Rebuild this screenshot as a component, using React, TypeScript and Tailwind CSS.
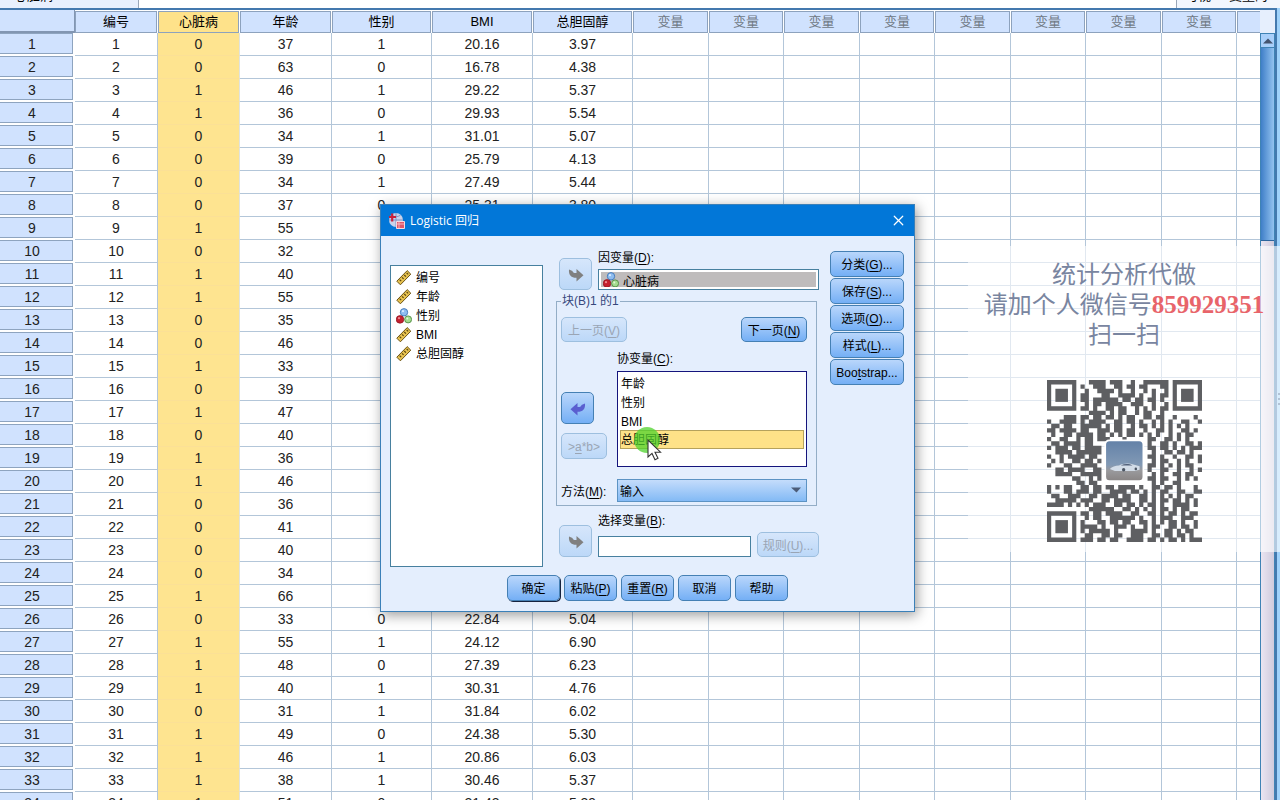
import { useState } from "react";
import type { ReactNode } from "react";
import { X } from "lucide-react";

const columns = [
  { name: "编号", width: "w-[83px]" },
  { name: "心脏病", width: "w-[82px]" },
  { name: "年龄", width: "w-[92px]" },
  { name: "性别", width: "w-[100px]" },
  { name: "BMI", width: "w-[101px]" },
  { name: "总胆固醇", width: "w-[100px]" },
];

const emptyColumns = [
  "w-[76px]",
  "w-[75px]",
  "w-[76px]",
  "w-[75px]",
  "w-[76px]",
  "w-[75px]",
  "w-[76px]",
  "w-[75px]",
];

// 心脏病, 年龄, 性别, BMI, 总胆固醇
const cases: string[][] = [
  ["0", "37", "1", "20.16", "3.97"],
  ["0", "63", "0", "16.78", "4.38"],
  ["1", "46", "1", "29.22", "5.37"],
  ["1", "36", "0", "29.93", "5.54"],
  ["0", "34", "1", "31.01", "5.07"],
  ["0", "39", "0", "25.79", "4.13"],
  ["0", "34", "1", "27.49", "5.44"],
  ["0", "37", "0", "25.31", "3.80"],
  ["1", "55"],
  ["0", "32"],
  ["1", "40"],
  ["1", "55"],
  ["0", "35"],
  ["0", "46"],
  ["1", "33"],
  ["0", "39"],
  ["1", "47"],
  ["0", "40"],
  ["1", "36"],
  ["1", "46"],
  ["0", "36"],
  ["0", "41"],
  ["0", "40"],
  ["0", "34"],
  ["1", "66"],
  ["0", "33", "0", "22.84", "5.04"],
  ["1", "55", "1", "24.12", "6.90"],
  ["1", "48", "0", "27.39", "6.23"],
  ["1", "40", "1", "30.31", "4.76"],
  ["0", "31", "1", "31.84", "6.02"],
  ["1", "49", "0", "24.38", "5.30"],
  ["1", "46", "1", "20.86", "6.03"],
  ["1", "38", "1", "30.46", "5.37"],
  ["1", "51", "0", "21.43", "5.39"],
];

const sourceVariables = [
  { name: "编号", nominal: false },
  { name: "年龄", nominal: false },
  { name: "性别", nominal: true },
  { name: "BMI", nominal: false },
  { name: "总胆固醇", nominal: false },
];

const covariates = ["年龄", "性别", "BMI", "总胆固醇"];

const qrRows = [
  "..........####.###..#..######........",
  "........#..###..##.##.##...##........",
  ".........#..####.#..#..#.#..#........",
  "........##...##..####.#..#.##........",
  "........##.######.##.##.##.#.........",
  ".........#.##.####..###..#..#........",
  "........##.#..##.##..#.#.#.##........",
  "..........####.#.##..#.##..#.........",
  "....###.##.##.##.#.##..##.##..#....#.",
  "#..####.#.####..##.##.#..#.#.#..##..#",
  ".##.##..#####.#.##..#.##.#.#.#.#.#...",
  "##.####.##..###.##.##..#..##.#..##.#.",
  ".#..##.####.##.#.#.##.#.#.#..#.#.##..",
  "#..##..#.##.###...#.....##..##.#.#...",
  ".##.####.##.............#..##.#..##.#",
  "#.###.##.####...........##.##.#.#.###",
  "..####.######............#..##.##.#..",
  "#..#.####.##............##.#..#..##.#",
  ".#.#..##.##.#............#.##..#.#..#",
  "#...##..####............##.#.#.#.##..",
  "..##.####..##...........#..##..#..#.#",
  "..####..#####............#.#..##.##..",
  "......##..#.#...........##.##..#.#.#.",
  ".......##.##.............#.#..##.....",
  "#.#.##..##.##.##.####.#..##.##.#...#.",
  "#...##.###.##..####.##.#.#.##..##..##",
  ".##..###..##.####.##..##.#.#.#.#.##..",
  "..#####.###..##.####..##.#.##.##.#.#.",
  "####.#.#.#.###..##.##.#.##.#..####.#.",
  "..........######..##.#.#.#.##.#.##...",
  "........##.##.####..##..##.#.##.#.##.",
  ".........#.##..######.#..#.###..###..",
  "........#...##.##.##..##.#.#.##.#..#.",
  "........####.#..###.#..#.##..##.##.#.",
  "........#.#####.#...####.#..##.#.##..",
  ".........##..##.##..###..##.##.##.#..",
  "........###.##.##..####.##.#.##.#.###",
];

const qrPath = qrRows
  .map((row, y) =>
    row
      .split("")
      .map((c, x) => (c === "#" ? `M${x} ${y}h1v1h-1z` : ""))
      .join("")
  )
  .join("");

const RulerIcon = () => (
  <svg className="h-4 w-4 shrink-0" viewBox="0 0 16 16">
    <path d="M.8 11.200 11.200.6l3.600 3.600L4.400 14.800z" fill="#e8c350" stroke="#6b5314" />
    <path
      d="m3.600 9.600 1.600 1.600M6 7.300l1.600 1.600M8.300 5l1.600 1.600M10.600 2.800l1.600 1.600"
      stroke="#5a4510"
      strokeWidth="1.200"
    />
  </svg>
);

const NominalIcon = () => (
  <svg className="h-4 w-4 shrink-0" viewBox="0 0 16 16">
    <circle cx="8" cy="4.300" r="3.700" fill="#8fbdf0" stroke="#3f76b8" strokeWidth=".9" />
    <circle cx="4" cy="11.400" r="3.800" fill="#c4202f" stroke="#8c1420" strokeWidth=".7" />
    <circle cx="12.100" cy="11.400" r="3.500" fill="#a5dc8f" stroke="#4f8a42" strokeWidth=".9" />
    <circle cx="3" cy="10.200" r="1.100" fill="#ef8a90" />
    <circle cx="7" cy="3.200" r="1.100" fill="#d9ebff" />
    <circle cx="11.300" cy="10.400" r="1" fill="#e2f8d8" />
  </svg>
);

const AppIcon = () => (
  <svg className="h-[18px] w-[18px]" viewBox="0 0 18 18">
    <circle cx="8" cy="8" r="7" fill="#c9d3ea" />
    <path d="M8 1v14M1 8h14M3.500 3.200c3 2 6 2 9 0" stroke="#7f93c4" fill="none" />
    <path d="M4.200 1.500v8M1 5h7" stroke="#c8203a" strokeWidth="2.200" />
    <path d="M8.500 9.500h8v7h-8z" fill="#e0566a" stroke="#f6dbe2" />
    <path d="M8.500 12h8M11 9.500v7" stroke="#f9c9d0" strokeWidth=".8" />
  </svg>
);

const ArrowShape = ({ left, color }: { left?: boolean; color: string }) => (
  <svg
    className={left ? "h-4 w-4 -scale-x-100" : "h-4 w-4"}
    viewBox="0 0 16 16"
    fill={color}
  >
    <path d="M1 2.500 4.500 4c.3 1.600 1.500 2.200 4 2V2L15.500 8.200 8.500 14.500V10.800C3.800 11 .4 8.500 1 2.500z" />
  </svg>
);

// mnemonic letter shown underlined in brackets
const Key = ({ k }: { k: string }) => (
  <span>
    (<u className="underline-offset-2">{k}</u>)
  </span>
);

const DialogButton = ({
  children,
  className,
  disabled,
  label,
}: {
  children: ReactNode;
  className: string;
  disabled?: boolean;
  label?: string;
}) => (
  <button
    type="button"
    disabled={disabled}
    aria-label={label}
    className={`flex shrink-0 items-center justify-center whitespace-nowrap rounded-[5px] border pt-0.5 ${
      disabled
        ? "border-[#9dbfdf] bg-linear-to-b from-[#d6e6fb] to-[#bcd8f8] text-[#9aa5b4]"
        : "border-[#4580b4] bg-linear-to-b from-[#b9d6fb] to-[#74aff5] text-black"
    } ${className}`}
  >
    {children}
  </button>
);

const DataGrid = () => (
  <table className="w-full table-fixed border-separate border-spacing-0 text-center text-sm text-[#222]">
    <colgroup>
      <col className="w-[75px]" />
      {columns.map((c) => (
        <col key={c.name} className={c.width} />
      ))}
      {emptyColumns.map((w, i) => (
        <col key={i} className={w} />
      ))}
      <col />
    </colgroup>
    <thead>
      <tr className="h-[23px] text-[13px] text-black">
        <th className="p-0">
          <div className="h-[23px] border-r border-b-2 border-[#8296b2] bg-[#d0e2fe]" />
        </th>
        {columns.map((c) => (
          <th key={c.name} className="p-0 pr-px font-normal">
            <div
              className={`h-[22px] border border-[#8da2bd] leading-5 ${
                c.name === "心脏病" ? "bg-[#fee28a]" : "bg-[#d0e2fe]"
              }`}
            >
              {c.name}
            </div>
          </th>
        ))}
        {emptyColumns.map((_, i) => (
          <th key={i} className="p-0 pr-px font-normal text-[#6f7985]">
            <div className="h-[22px] border border-[#8da2bd] bg-[#d0e2fe] leading-5">
              变量
            </div>
          </th>
        ))}
        <th className="p-0">
          <div className="h-[22px] border border-r-0 border-[#8da2bd] bg-[#d0e2fe]" />
        </th>
      </tr>
    </thead>
    <tbody>
      {cases.map((row, i) => (
        <tr key={i} className="h-[23px]">
          <th className="p-0 pr-0.5 pb-0.5 font-normal">
            <div className="h-[21px] border border-l-0 border-[#8ea4bf] bg-[#d0e2fe] pr-2 leading-5">
              {i + 1}
            </div>
          </th>
          <td className="border-r border-b border-[#b3c6d9] p-0">{i + 1}</td>
          {columns.slice(1).map((c, j) => (
            <td
              key={c.name}
              className={
                j === 0
                  ? "border-r border-b border-r-[#dfe3e0] border-b-[#fbe096] bg-[#fee490] p-0"
                  : "border-r border-b border-[#b3c6d9] p-0"
              }
            >
              {row[j]}
            </td>
          ))}
          {emptyColumns.map((_, j) => (
            <td key={j} className="border-r border-b border-[#b3c6d9] p-0" />
          ))}
          <td className="border-b border-[#b3c6d9] p-0" />
        </tr>
      ))}
    </tbody>
  </table>
);

const LogisticDialog = () => {
  const [selected, setSelected] = useState("总胆固醇");

  return (
    <div
      role="dialog"
      aria-labelledby="dialog-title"
      className="absolute top-[204px] left-[380px] w-[535px] border border-[#3b80b8] bg-[#e4eefd] text-xs text-black shadow-[2px_3px_12px_rgba(0,0,0,0.4)]"
    >
      <div className="flex h-[31px] items-center bg-[#0277d8] pr-[7px] pl-[7px] text-white">
        <AppIcon />
        <h1
          id="dialog-title"
          className="ml-1 flex-1 font-['Open_Sans','Noto_Sans_CJK_SC',sans-serif] text-xs"
        >
          Logistic 回归
        </h1>
        <button type="button" aria-label="关闭">
          <X size={17} strokeWidth={1.7} />
        </button>
      </div>

      <div className="flex items-start pt-3.5 pr-2.5 pl-[9px]">
        <ul
          role="listbox"
          aria-label="变量"
          className="mt-[15px] h-[302px] w-[153px] border border-[#47809f] bg-white pt-0.5 pl-[5px]"
        >
          {sourceVariables.map((v) => (
            <li
              key={v.name}
              role="option"
              aria-selected={false}
              className="flex h-[19px] items-center gap-1"
            >
              {v.nominal ? <NominalIcon /> : <RulerIcon />}
              {v.name}
            </li>
          ))}
        </ul>

        <div className="ml-[13px] flex-1">
          <div className="flex h-10 items-end gap-1.5 pl-[3px]">
            <DialogButton className="h-8 w-[33px]" disabled label="移入因变量">
              <ArrowShape color="#808080" />
            </DialogButton>
            <div className="flex h-full flex-1 flex-col justify-between">
              <label htmlFor="dependent" className="leading-4">
                因变量
                <Key k="D" />:
              </label>
              <div className="flex h-[21px] items-center border border-[#47809f] bg-[#bfbcbc] pl-1 outline-2 -outline-offset-3 outline-white">
                <NominalIcon />
                <input
                  id="dependent"
                  readOnly
                  value="心脏病"
                  className="ml-1 h-5 w-40 bg-transparent pt-0.5 outline-none"
                />
              </div>
            </div>
          </div>

          <fieldset className="mt-[3px] mr-0.5 border border-[#93adc6] pr-[9px] pb-[3px] pl-1">
            <legend className="px-px leading-4 text-[#37477c]">块(B)1 的1</legend>
            <div className="flex justify-between pt-2">
              <DialogButton className="h-[25px] w-[66px]" disabled>
                上一页
                <Key k="V" />
              </DialogButton>
              <DialogButton className="h-[25px] w-[66px]">
                下一页
                <Key k="N" />
              </DialogButton>
            </div>
            <div id="covariates" className="mt-[9px] ml-14 leading-4">
              协变量
              <Key k="C" />:
            </div>
            <div className="mt-1 flex">
              <div className="w-14 pt-[21px]">
                <DialogButton className="h-8 w-[33px]" label="移出协变量">
                  <ArrowShape left color="#5a5fd0" />
                </DialogButton>
                <DialogButton className="mt-[9px] h-[26px] w-[46px]" disabled>
                  &gt;<u className="underline-offset-2">a</u>*b&gt;
                </DialogButton>
              </div>
              <ul
                role="listbox"
                aria-labelledby="covariates"
                className="h-24 flex-1 border border-[#14147c] bg-white px-0.5 pt-px"
              >
                {covariates.map((name) => (
                  <li
                    key={name}
                    role="option"
                    aria-selected={name === selected}
                    onClick={() => setSelected(name)}
                    className={
                      name === selected
                        ? "h-[19px] border border-[#b5a25c] bg-[#fee288] leading-[19px]"
                        : "h-[19px] px-px leading-[22px]"
                    }
                  >
                    {name}
                  </li>
                ))}
              </ul>
            </div>
            <div className="mt-3 flex items-center">
              <label htmlFor="method" className="w-14 pt-0.5">
                方法
                <Key k="M" />:
              </label>
              <div className="relative flex-1">
                <select
                  id="method"
                  className="block h-[23px] w-full appearance-none border border-[#5c93c4] bg-linear-to-b from-[#c4dcfb] to-[#83baf5] pt-0.5 pl-0.5"
                >
                  <option>输入</option>
                </select>
                <svg
                  className="pointer-events-none absolute top-2 right-1.5 h-1.5 w-2.5"
                  viewBox="0 0 10 6"
                >
                  <path d="M0 .5h10L5.500 5.500z" fill="#4c5c78" />
                </svg>
              </div>
            </div>
          </fieldset>

          <div className="mt-[7px] flex h-11 items-end gap-1.5 pl-[3px]">
            <DialogButton className="h-8 w-[33px]" disabled label="移入选择变量">
              <ArrowShape color="#808080" />
            </DialogButton>
            <div className="flex h-full flex-1 flex-col justify-between">
              <label htmlFor="selection" className="leading-4">
                选择变量
                <Key k="B" />:
              </label>
              <input
                id="selection"
                className="h-[21px] w-full border border-[#47809f] bg-white px-1"
              />
            </div>
            <DialogButton className="h-[25px] w-[62px]" disabled>
              规则
              <Key k="U" />
              ...
            </DialogButton>
          </div>
        </div>

        <div className="mt-px ml-[11px] flex w-[74px] flex-col gap-px">
          <DialogButton className="h-[26px]">
            分类
            <Key k="G" />
            ...
          </DialogButton>
          <DialogButton className="h-[26px]">
            保存
            <Key k="S" />
            ...
          </DialogButton>
          <DialogButton className="h-[26px]">
            选项
            <Key k="O" />
            ...
          </DialogButton>
          <DialogButton className="h-[26px]">
            样式
            <Key k="L" />
            ...
          </DialogButton>
          <DialogButton className="h-[26px]">
            Boo<u className="underline-offset-2">t</u>strap...
          </DialogButton>
        </div>
      </div>

      <div className="mt-2 flex justify-center gap-1 pb-2.5">
        <DialogButton className="h-[26px] w-[53px] shadow-[1px_1px_0_#16233f]">
          确定
        </DialogButton>
        <DialogButton className="h-[26px] w-[53px]">
          粘贴
          <Key k="P" />
        </DialogButton>
        <DialogButton className="h-[26px] w-[53px]">
          重置
          <Key k="R" />
        </DialogButton>
        <DialogButton className="h-[26px] w-[53px]">取消</DialogButton>
        <DialogButton className="h-[26px] w-[53px]">帮助</DialogButton>
      </div>
    </div>
  );
};

const QrCode = () => (
  <svg
    className="h-[162px] w-[155px]"
    viewBox="0 0 37 37"
    preserveAspectRatio="none"
    role="img"
    aria-label="二维码"
  >
    <defs>
      <linearGradient id="sky" x1="0" y1="0" x2="0" y2="1">
        <stop offset="0" stopColor="#6482a8" />
        <stop offset=".6" stopColor="#8199b5" />
        <stop offset=".75" stopColor="#9a9a9d" />
        <stop offset="1" stopColor="#8a8686" />
      </linearGradient>
    </defs>
    <path d={qrPath} fill="#5e5f62" />
    {["0 0", "30 0", "0 30"].map((at) => (
      <g key={at} transform={`translate(${at})`}>
        <path d="M.5.5h6v6h-6z" fill="none" stroke="#5e5f62" />
        <path d="M2 2h3v3H2z" fill="#5e5f62" />
      </g>
    ))}
    <rect x="13.700" y="13.600" width="9.500" height="9.700" rx="1.100" fill="#fff" />
    <rect x="14.100" y="14" width="8.700" height="8.900" rx=".8" fill="url(#sky)" />
    <path
      d="M15 20.300c.5-.6 1.300-.7 2.200-.8 1-.5 2.400-.6 3.400-.2l1.500.4v.8l-1.200.3h-4.700z"
      fill="#d3dde8"
    />
    <path d="M17.600 19.500c.9-.4 2-.4 2.800 0z" fill="#51617a" />
    <circle cx="18.300" cy="20.500" r=".4" fill="#4b5563" />
    <circle cx="21.200" cy="20.300" r=".3" fill="#4b5563" />
  </svg>
);

export default function App() {
  return (
    <div className="relative flex h-screen flex-col overflow-hidden bg-white font-['Liberation_Sans','Noto_Sans_CJK_SC',sans-serif]">
      {/* edit bar, scrolled mostly off the top */}
      <div className="flex h-2 shrink-0 items-end overflow-hidden text-[13px] leading-4">
        <div className="w-[139px] border-r border-[#9aa7b8] bg-[#e8f0fd] pb-1 pl-3.5">
          心脏病
        </div>
        <div className="flex-1 pb-1">&nbsp;</div>
        <div className="w-[104px] border-l border-[#9aa7b8] bg-[#f1f6fe] pb-1 pl-2 whitespace-nowrap">
          可视: 6 变量的
        </div>
      </div>

      <div className="flex min-h-0 flex-1 bg-[#9fd2fb]">
        <div className="flex min-w-0 flex-1 overflow-hidden border-t-2 border-r-2 border-[#4479ae] bg-white">
          <div className="min-w-0 flex-1 overflow-hidden">
            <DataGrid />
          </div>
          <div className="flex w-[15px] flex-col bg-[#e6effd] pt-[23px]">
            <div className="flex flex-1 flex-col border-x border-[#3f83b5] bg-linear-to-r from-[#ebe5f1] to-[#cfcbdd]">
              <button
                type="button"
                aria-label="向上滚动"
                className="flex h-[15px] items-center justify-center border-y border-[#3f83b5] bg-[#a9cffa]"
              >
                <svg className="h-1.5 w-2.5" viewBox="0 0 10 6">
                  <path d="M0 5.500 5 .5l5 5z" fill="#44546f" />
                </svg>
              </button>
              <div className="h-[193px] border-b border-[#2d649c] bg-linear-to-r from-[#3f7fc8] to-[#93c3f0]" />
            </div>
          </div>
        </div>
        {/* splitter grip */}
        <div className="flex w-[3px] flex-col items-end gap-[3px] pt-[385px]">
          <span className="h-0.5 w-0.5 bg-[#3f6a98]" />
          <span className="h-0.5 w-0.5 bg-[#3f6a98]" />
          <span className="h-0.5 w-0.5 bg-[#3f6a98]" />
        </div>
      </div>

      <LogisticDialog />

      <aside className="absolute top-[246px] right-0 flex h-[306px] w-[312px] flex-col items-center bg-white/60 pt-3.5">
        <p className="text-center text-2xl leading-[30px] whitespace-nowrap text-[#7985a0]">
          统计分析代做
          <br />
          请加个人微信号
          <b className="font-['Liberation_Serif',serif] text-[25px] font-bold text-[#e8646a]">
            859929351
          </b>
          <br />
          扫一扫
        </p>
        <div className="mt-[30px]">
          <QrCode />
        </div>
      </aside>

      <div className="pointer-events-none absolute top-[427px] left-[634px]">
        <svg className="h-9 w-8" viewBox="0 0 32 36">
          <circle cx="13" cy="13" r="13" fill="#4fd32c" fillOpacity=".75" />
          <path
            d="M14 13v17l4-3.600 3 6.300 3-1.400-3-6.100h5.500z"
            fill="#fff"
            stroke="#333"
            strokeWidth="1.100"
          />
        </svg>
      </div>
    </div>
  );
}
